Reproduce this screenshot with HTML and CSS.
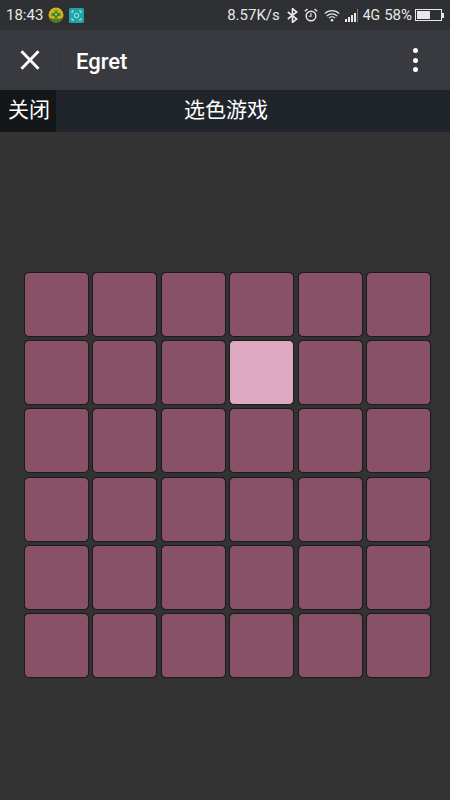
FILE: index.html
```html
<!DOCTYPE html>
<html lang="zh">
<head>
    <meta charset="UTF-8">
    <meta name="viewport" content="width=device-width, initial-scale=1.0">
    <title>选色游戏</title>
    <link rel="stylesheet" href="styles.css">
</head>
<body>
    <!-- Status bar -->
    <div class="statusbar">
        <div class="status-left">
            <span>18:43</span>
            <svg class="app-icon" width="16" height="16" viewBox="0 0 16 16">
                <circle cx="8" cy="8" r="7.5" fill="#d4b01c"/>
                <path d="M1 10.500a7.500 7.500 0 0 0 14 0q-7 3-14 0z" fill="#4f7d1e"/>
                <path d="M6.500 3.500h3v2.500h3v3h-3v2.500h-3V9h-3V6h3z" fill="#3c8a2a"/>
                <circle cx="8" cy="7.500" r="1" fill="#e5d24a"/>
            </svg>
            <svg class="app-icon" width="15" height="15" viewBox="0 0 15 15">
                <rect width="15" height="15" rx="1.500" fill="#1ea5a8"/>
                <path d="M3 5V3h2M10 3h2v2M12 10v2h-2M5 12H3v-2" fill="none" stroke="#bfe6e4" stroke-width="1"/>
                <circle cx="7.500" cy="7.500" r="2.200" fill="none" stroke="#bfe6e4" stroke-width="1"/>
            </svg>
        </div>
        <div class="status-right">
            <span class="speed">8.57K/s</span>
            <svg width="11" height="15" viewBox="0 0 11 15" class="ic-bt">
                <path d="M.8 4l9 7-4.300 3.400V.6L9.800 4l-9 7" fill="none" stroke="#e8e8e8" stroke-width="1.600"/>
            </svg>
            <svg width="14" height="14" viewBox="0 0 14 14" class="ic-alarm">
                <circle cx="7" cy="8" r="4.800" fill="none" stroke="#e8e8e8" stroke-width="1.400"/>
                <path d="M7 5v3.300H4.800" fill="none" stroke="#e8e8e8" stroke-width="1.100"/>
                <path d="M.8 3.300L3.500 1M13.200 3.300L10.500 1" fill="none" stroke="#e8e8e8" stroke-width="1.400"/>
            </svg>
            <svg width="16" height="13" viewBox="0 0 17 13" class="ic-wifi">
                <path d="M.8 4.500a11 11 0 0 1 15.400 0M3 7a8 8 0 0 1 11 0M5.300 9.300a4.600 4.600 0 0 1 6.400 0" fill="none" stroke="#e8e8e8" stroke-width="1.300"/>
                <circle cx="8.500" cy="11.500" r="1.400" fill="#e8e8e8"/>
            </svg>
            <div class="signal">
                <i class="s1"></i><i class="s2"></i><i class="s3"></i><i class="s4"></i><i class="s5"></i>
            </div>
            <span class="net">4G</span>
            <span class="percent">58%</span>
            <div class="battery"><div class="battery-fill"></div></div>
            <div class="battery-tip"></div>
        </div>
    </div>

    <!-- Toolbar -->
    <div class="toolbar">
        <svg class="close-icon" width="22" height="22" viewBox="0 0 22 22">
            <path d="M2.500 2.300l17 17.400M19.500 2.300l-17 17.400" stroke="#fff" stroke-width="2.800" fill="none"/>
        </svg>
        <div class="divider"></div>
        <div class="title">Egret</div>
        <div class="more">
            <i></i><i></i><i></i>
        </div>
    </div>

    <!-- Game header -->
    <div class="banner">
        <div class="close-btn">关闭</div>
        <div class="game-title">选色游戏</div>
    </div>

    <div class="stage">
        <div class="board" id="board"></div>
    </div>

    <script>
        const board = document.getElementById('board');
        for (let i = 0; i < 36; i++) {
            const cell = document.createElement('div');
            cell.className = i === 9 ? 'cell active' : 'cell';
            board.appendChild(cell);
        }
    </script>
</body>
</html>
```

FILE: styles.css
```css
* {
    box-sizing: border-box;
}

body {
    margin: 0;
    width: 450px;
    height: 800px;
    overflow: hidden;
    background: #333333;
    font-family: Roboto, "Noto Sans CJK SC", sans-serif;
    color: #fff;
}

.statusbar {
    height: 30px;
    background: #2e3034;
    display: flex;
    justify-content: space-between;
    align-items: center;
    padding: 0 5px 0 6px;
    font-size: 15px;
    color: #e8e8e8;
}

.status-left,
.status-right {
    display: flex;
    align-items: center;
}

.status-left .app-icon {
    margin-left: 5px;
}

.status-left .app-icon + .app-icon {
    margin-left: 5px;
}

.ic-bt {
    margin-left: 7px;
}

.ic-alarm {
    margin-left: 6px;
}

.ic-wifi {
    margin-left: 6px;
}

.signal {
    display: flex;
    align-items: flex-end;
    gap: 1px;
    height: 13px;
    margin-left: 5px;
}

.signal i {
    display: block;
    width: 2px;
    background: #e8e8e8;
}

.signal .s1 { height: 3px; }
.signal .s2 { height: 5px; }
.signal .s3 { height: 7px; }
.signal .s4 { height: 9px; }
.signal .s5 { height: 13px; width: 1px; background: #77797c; }

.net {
    font-size: 14px;
    margin-left: 5px;
}

.percent {
    margin-left: 4px;
}

.battery {
    width: 27px;
    height: 12px;
    border: 1.500px solid #e8e8e8;
    margin-left: 3px;
    padding: 1px;
}

.battery-fill {
    width: 13px;
    height: 100%;
    background: #e8e8e8;
}

.battery-tip {
    width: 2px;
    height: 5px;
    background: #e8e8e8;
    margin-right: 1px;
}

.toolbar {
    height: 60px;
    background: #393a3f;
    display: flex;
    align-items: center;
    padding-left: 19px;
}

.divider {
    width: 1px;
    height: 30px;
    background: #34353a;
    margin-left: 19px;
}

.title {
    font-size: 22px;
    font-weight: 500;
    margin-left: 15px;
    padding-top: 2px;
}

.more {
    margin-left: auto;
    margin-right: 32px;
    display: flex;
    flex-direction: column;
    gap: 4.500px;
}

.more i {
    display: block;
    width: 5px;
    height: 5px;
    border-radius: 50%;
    background: #fff;
}

.banner {
    height: 42px;
    background: #20242b;
    display: flex;
    align-items: center;
    font-size: 21px;
}

.close-btn {
    width: 56px;
    height: 100%;
    background: #14171a;
    padding-left: 8px;
    line-height: 40px;
}

.game-title {
    margin-left: 128px;
    line-height: 40px;
    height: 100%;
}

.stage {
    padding: 140px 0 0 24px;
}

.board {
    display: grid;
    grid-template-columns: repeat(6, 65px);
    grid-auto-rows: 65px;
    gap: 3.200px 3.400px;
}

.cell {
    background: #885167;
    border: 1px solid #1c1c1c;
    border-radius: 5px;
    box-shadow: 0 0 1px #1c1c1c;
}

.cell.active {
    background: #e0a9c2;
}
```
